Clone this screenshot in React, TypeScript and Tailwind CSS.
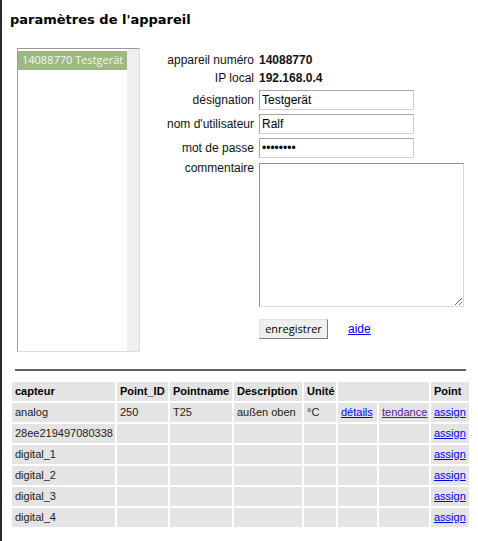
import React from 'react';

const rows = [
  { capteur: 'analog', id: '250', name: 'T25', desc: 'außen oben', unit: '°C', links: true },
  { capteur: '28ee219497080338' },
  { capteur: 'digital_1' },
  { capteur: 'digital_2' },
  { capteur: 'digital_3' },
  { capteur: 'digital_4' },
] as { capteur: string; id?: string; name?: string; desc?: string; unit?: string; links?: boolean }[];

const label = "text-right text-[12px] text-[#111] font-['Liberation_Sans',Arial,sans-serif]";
const field =
  "block h-[20px] w-[155px] border border-[#cfcfcf] border-t-[#a3a3a3] border-l-[#a3a3a3] bg-white px-[2px] text-[12px] text-black font-['Liberation_Sans',Arial,sans-serif] outline-none";
const td = 'h-[19px] bg-[#e4e4e4] px-[3px] py-0 align-middle leading-[13px]';

const App: React.FC = () => {
  return (
    <div className="min-h-screen border-l-2 border-[#2b2b2b] bg-white pl-[8px] pt-[12px] font-['DejaVu_Sans',sans-serif]">
      <h1 className="text-[13px] font-bold leading-[15px] text-black">paramètres de l'appareil</h1>

      <div className="mt-[21px] flex">
        {/* device list */}
        <div className="ml-[7px] flex h-[304px] w-[123px] border border-[#dcdcdc] border-t-[#9a9a9a] border-l-[#9a9a9a]">
          <div className="flex-1 pt-[2px]">
            <div className="flex h-[19px] items-center bg-[#9db97f] pl-[4px] text-[11px] text-[#f4f4f4] font-['Open_Sans',sans-serif]">
              14088770 Testgerät
            </div>
          </div>
          <div className="w-[12px] bg-[#efefef]" />
        </div>

        {/* settings form */}
        <div className="ml-[10px] mt-[3px] grid grid-cols-[104px_auto] gap-x-[5px] content-start">
          <div className={`${label} flex h-[18px] items-center justify-end`}>appareil numéro</div>
          <div className="flex h-[18px] items-center text-[12px] font-bold text-[#111] font-['Liberation_Sans',Arial,sans-serif]">14088770</div>

          <div className={`${label} flex h-[18px] items-center justify-end`}>IP local</div>
          <div className="flex h-[18px] items-center text-[12px] font-bold text-[#111] font-['Liberation_Sans',Arial,sans-serif]">192.168.0.4</div>

          <div className={`${label} mt-[3px] flex h-[20px] items-center justify-end`}>désignation</div>
          <div className="mt-[3px] h-[20px]"><input className={field} defaultValue="Testgerät" /></div>

          <div className={`${label} mt-[4px] flex h-[20px] items-center justify-end`}>nom d'utilisateur</div>
          <div className="mt-[4px] h-[20px]"><input className={field} defaultValue="Ralf" /></div>

          <div className={`${label} mt-[4px] flex h-[20px] items-center justify-end`}>mot de passe</div>
          <div className="mt-[4px] h-[20px]"><input type="password" className={field} defaultValue="password" /></div>

          <div className={`${label} mt-[3px] leading-[14px]`}>commentaire</div>
          <div className="mt-[5px] h-[144px]">
            <textarea className="block h-[144px] w-[205px] border border-[#dadada] border-t-[#8f8f8f] border-l-[#8f8f8f] bg-white text-[12px] outline-none font-['Liberation_Sans',Arial,sans-serif]" />
          </div>

          <div />
          <div className="mt-[12px] flex h-[20px] items-center">
            <button className="block h-[20px] w-[69px] border border-[#7a7a7a] border-t-[#e0e0e0] border-l-[#e0e0e0] bg-[#efefef] text-[11px] text-black font-['Open_Sans',sans-serif]">
              enregistrer
            </button>
            <a href="#" className="ml-[20px] text-[12px] text-[#0000ee] underline font-['Liberation_Sans',Arial,sans-serif]">aide</a>
          </div>
        </div>
      </div>

      <div className="ml-[5px] mt-[17px] h-[2px] w-[451px] bg-[#5f5f5f]" />

      {/* sensors table */}
      <table className="mt-[9px] w-[461px] table-fixed border-separate border-spacing-[2px] text-left text-[11px] text-[#222] font-['Liberation_Sans',Arial,sans-serif]">
        <colgroup>
          <col className="w-[103px]" />
          <col className="w-[51px]" />
          <col className="w-[62px]" />
          <col className="w-[68px]" />
          <col className="w-[32px]" />
          <col className="w-[39px]" />
          <col className="w-[50px]" />
          <col className="w-[38px]" />
        </colgroup>
        <thead>
          <tr>
            <th className={`${td} font-bold text-black`}>capteur</th>
            <th className={`${td} font-bold text-black`}>Point_ID</th>
            <th className={`${td} font-bold text-black`}>Pointname</th>
            <th className={`${td} font-bold text-black`}>Description</th>
            <th className={`${td} font-bold text-black`}>Unité</th>
            <th className={td} colSpan={2}></th>
            <th className={`${td} font-bold text-black`}>Point</th>
          </tr>
        </thead>
        <tbody>
          {rows.map((r) => (
            <tr key={r.capteur}>
              <td className={`${td} whitespace-nowrap`}>{r.capteur}</td>
              <td className={td}>{r.id}</td>
              <td className={td}>{r.name}</td>
              <td className={`${td} whitespace-nowrap`}>{r.desc}</td>
              <td className={td}>{r.unit}</td>
              <td className={td}>
                {r.links && <a href="#" className="text-[#0000ee] underline">détails</a>}
              </td>
              <td className={td}>
                {r.links && <a href="#" className="text-[#551a8b] underline">tendance</a>}
              </td>
              <td className={td}>
                <a href="#" className="text-[#0000ee] underline">assign</a>
              </td>
            </tr>
          ))}
        </tbody>
      </table>
    </div>
  );
};

export default App;
